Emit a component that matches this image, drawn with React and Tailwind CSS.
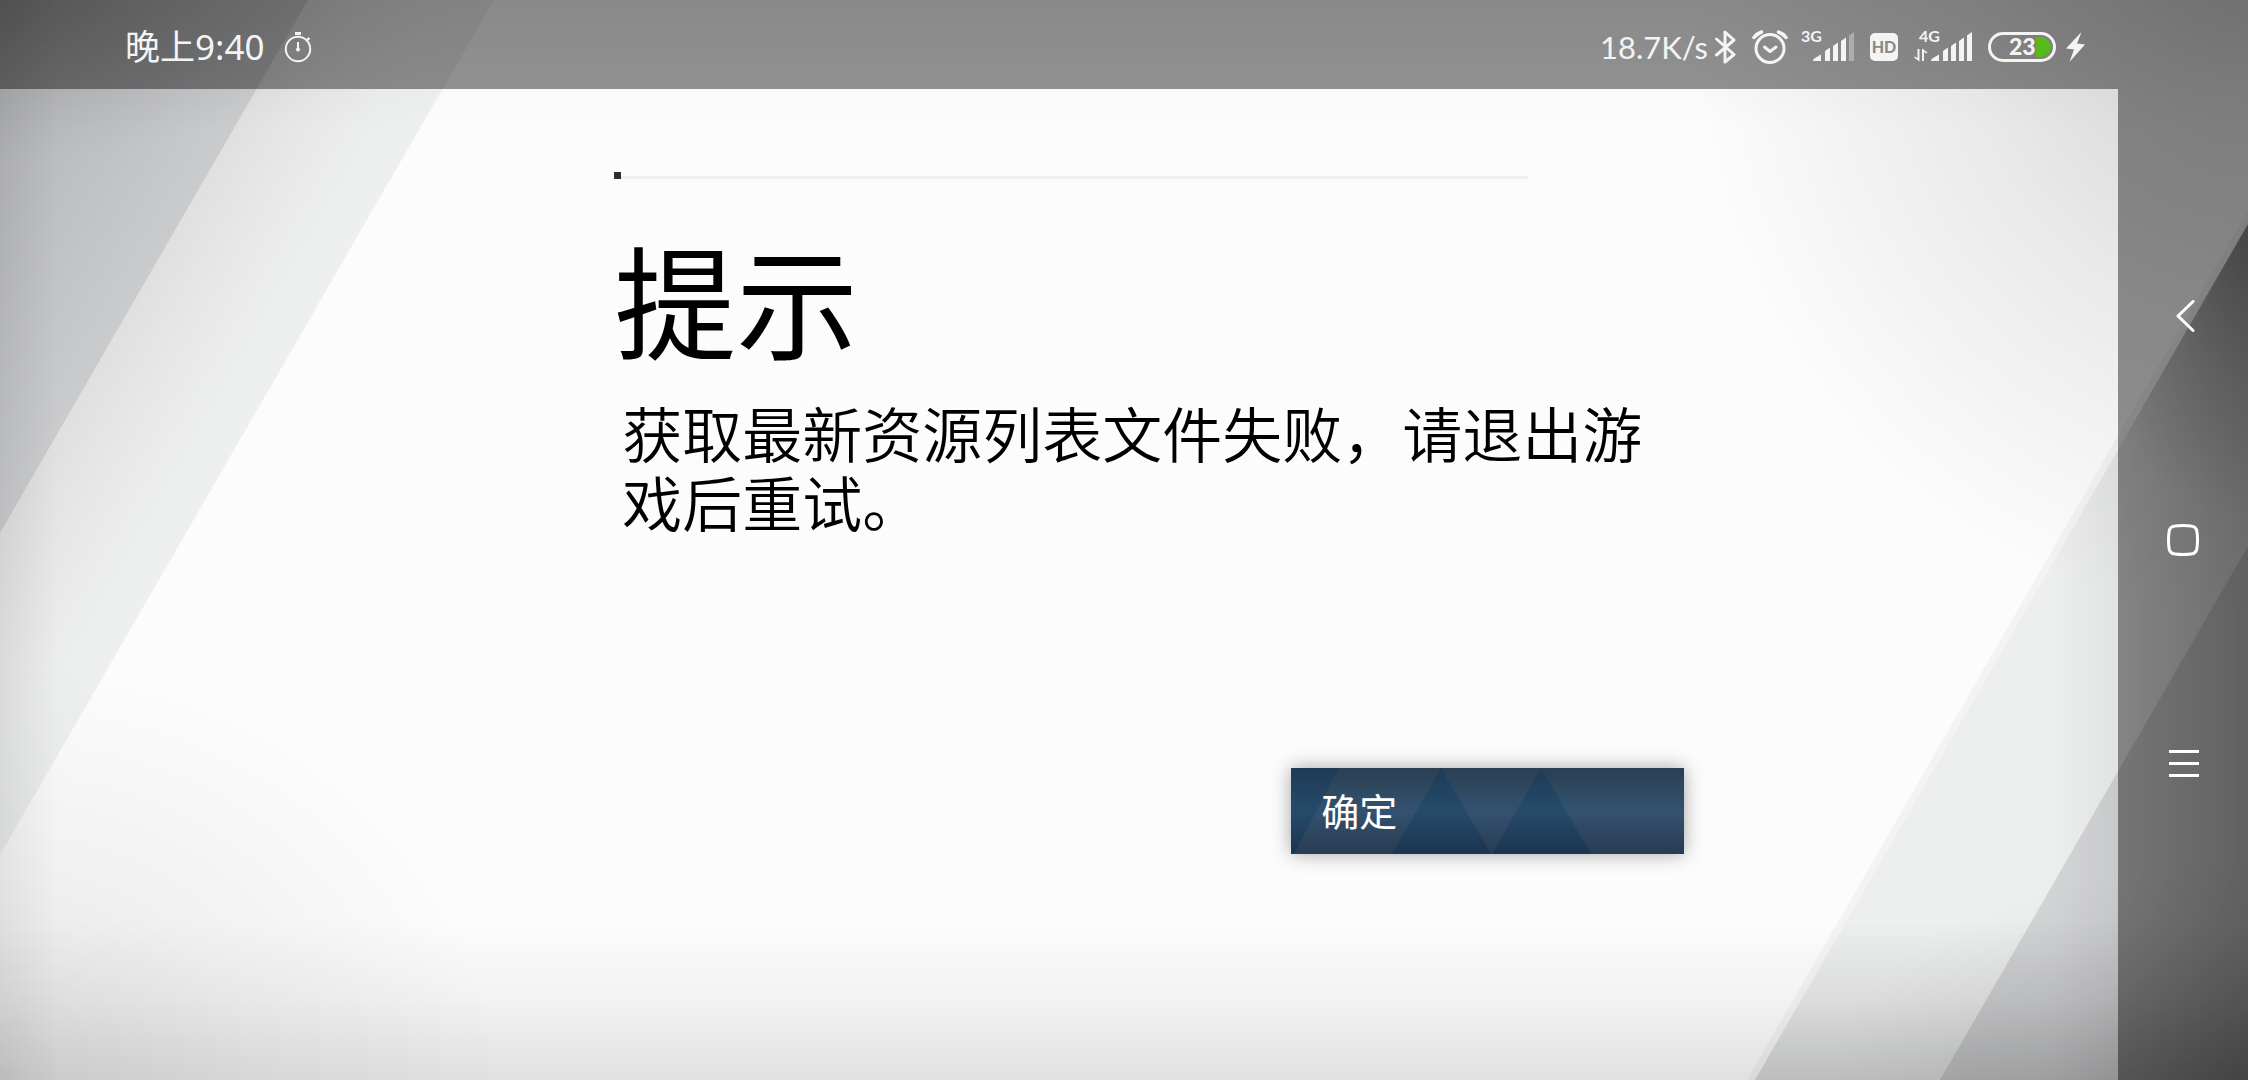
import React from 'react';

const latin = "font-['Lato','Noto_Sans_CJK_SC',sans-serif]";

function Backdrop() {
  return (
    <svg
      className="absolute inset-0 w-full h-full"
      viewBox="0 0 2248 1080"
      preserveAspectRatio="none"
      aria-hidden="true"
    >
      <defs>
        <linearGradient id="top" x1="0" y1="0" x2="0" y2="1">
          <stop offset="0" stopOpacity="0.06" />
          <stop offset="0.65" stopOpacity="0.015" />
          <stop offset="1" stopOpacity="0" />
        </linearGradient>
        <linearGradient id="bottom" x1="0" y1="0" x2="0" y2="1">
          <stop offset="0" stopOpacity="0" />
          <stop offset="0.5" stopOpacity="0.04" />
          <stop offset="1" stopOpacity="0.11" />
        </linearGradient>
        <linearGradient id="left" x1="0" y1="0" x2="1" y2="0">
          <stop offset="0" stopOpacity="0.06" />
          <stop offset="1" stopOpacity="0" />
        </linearGradient>
        <linearGradient id="right" gradientUnits="userSpaceOnUse" x1="2050" y1="0" x2="2248" y2="0">
          <stop offset="0" stopOpacity="0" />
          <stop offset="0.35" stopOpacity="0.05" />
          <stop offset="1" stopOpacity="0.21" />
        </linearGradient>
        <linearGradient id="wedge" gradientUnits="userSpaceOnUse" x1="0" y1="0" x2="231" y2="134">
          <stop offset="0" stopColor="#afb0b2" />
          <stop offset="1" stopColor="#cacbcd" />
        </linearGradient>
        <linearGradient id="stripe" gradientUnits="userSpaceOnUse" x1="231" y1="134" x2="371" y2="214">
          <stop offset="0" stopColor="#e0e0e0" />
          <stop offset="0.7" stopColor="#eceeed" />
          <stop offset="1" stopColor="#eef0ef" />
        </linearGradient>
        <radialGradient id="corner">
          <stop offset="0" stopOpacity="1" />
          <stop offset="0.5" stopOpacity="0.42" />
          <stop offset="1" stopOpacity="0" />
        </radialGradient>
        <clipPath id="band">
          <path d="M2248 224 1755 1080H2248Z" />
        </clipPath>
      </defs>
      <rect width="2248" height="1080" fill="#fcfcfc" />
      <path d="M0 0H494L0 855Z" fill="url(#stripe)" />
      <path d="M0 0H308L0 533Z" fill="url(#wedge)" />
      <path d="M2248 210 1747 1080H2248Z" fill="#f3f3f3" />
      <path d="M2248 224 1755 1080H2248Z" fill="#edefee" />
      <path d="M2248 546 1940 1080H2248Z" fill="#d3d4d6" />

      <rect width="2248" height="130" fill="url(#top)" />
      <rect y="920" width="2248" height="160" fill="url(#bottom)" />
      <rect width="60" height="1080" fill="url(#left)" />
      <ellipse cx="0" cy="0" rx="360" ry="160" fill="url(#corner)" opacity="0.12" />
      <ellipse cx="0" cy="1080" rx="500" ry="420" fill="url(#corner)" opacity="0.11" />
      <ellipse cx="2248" cy="0" rx="560" ry="620" fill="url(#corner)" opacity="0.18" />
      <g clipPath="url(#band)">
        <rect x="2050" width="198" height="1080" fill="url(#right)" />
        <rect x="1728" y="920" width="520" height="160" fill="url(#bottom)" />
        <ellipse cx="2248" cy="240" rx="180" ry="280" fill="url(#corner)" opacity="0.28" />
        <ellipse cx="2248" cy="1080" rx="420" ry="220" fill="url(#corner)" opacity="0.13" />
      </g>
    </svg>
  );
}

function TimerIcon() {
  return (
    <svg width="28" height="32" viewBox="0 0 28 32" fill="none" stroke="currentColor" strokeWidth="2">
      <circle cx="14" cy="18" r="12.2" />
      <path d="M11 2.5H17" strokeWidth="3" />
      <path d="M23 9 25.500 7" strokeWidth="2.500" />
      <path d="M14 11V18" />
      <circle cx="14" cy="18.500" r="2" fill="currentColor" stroke="none" />
    </svg>
  );
}

function BluetoothIcon() {
  return (
    <svg width="21" height="34" viewBox="0 0 21 34" fill="none" stroke="currentColor" strokeWidth="3" strokeLinejoin="round" strokeLinecap="round">
      <path d="M1.500 9 19 24.500 10 32V2L19 10 1.500 25" />
    </svg>
  );
}

function AlarmIcon() {
  return (
    <svg width="36" height="34" viewBox="0 0 36 34" fill="none" stroke="currentColor" strokeWidth="3" strokeLinecap="round">
      <circle cx="18" cy="18.500" r="14" />
      <path d="M12.500 17 18 21.500 24 17" strokeLinejoin="round" />
      <path d="M2 7.500Q5 3.500 9.500 2M34 7.500Q31 3.500 26.500 2" strokeWidth="3.500" />
    </svg>
  );
}

function Signal({ label, weak, data }) {
  return (
    <svg width="58" height="46" viewBox="0 -6 58 46" fill="currentColor">
      <text x="5" y="12" className="font-['Lato',sans-serif] text-[16px] font-bold">{label}</text>
      {data && (
        <path d="M5.500 19V31.500L0 27.500 1 26.500 3.500 28V19ZM8 31V18.500L13.500 22.500 12.500 23.500 10 22V31Z" />
      )}
      <path d="M17 31Q17 29 19 28L25 24.500V31ZM29 31V21L34 17.500V31ZM37 31V16L42 12.500V31ZM45 31V11L50 7.500V31Z" />
      <path d="M53 31V5.500L58 2V31Z" opacity={weak ? 0.35 : 1} />
    </svg>
  );
}

function HdIcon() {
  return (
    <svg width="28" height="28" viewBox="0 0 28 28">
      <rect width="28" height="28" rx="5" fill="currentColor" />
      <text x="14" y="20" textAnchor="middle" fill="#8a8a8a" className="font-['Lato',sans-serif] text-[16px] font-black">HD</text>
    </svg>
  );
}

function Battery() {
  return (
    <svg width="68" height="30" viewBox="0 0 68 30">
      <rect x="1.500" y="1.500" width="65" height="27" rx="13.500" fill="none" stroke="currentColor" strokeWidth="3" />
      <path d="M48 5H53A10 10 0 0 1 53 25H48Z" fill="#58b91c" />
      <text x="21" y="23" fill="currentColor" className="font-['Lato',sans-serif] text-[23px] font-black">23</text>
    </svg>
  );
}

function BoltIcon() {
  return (
    <svg width="19" height="30" viewBox="0 0 19 30" fill="currentColor">
      <path d="M15.500 0 0 16.500 8 17.500 3.500 30 19 12.500 11 11.500Z" />
    </svg>
  );
}

function StatusBar() {
  return (
    <header className="h-[89px] pl-[125px] pr-[33px] pt-[5px] flex items-center justify-between bg-black/42 text-[#f4f4f4]">
      <div className="flex items-center gap-5">
        <span className="font-['Noto_Sans','Noto_Sans_CJK_SC',sans-serif] text-[35px] leading-[40px]">晚上9:40</span>
        <TimerIcon />
      </div>
      <div className="flex items-center">
        <span className={`${latin} text-[31px] leading-[40px] mr-[7px]`}>18.7K/s</span>
        <span className="flex items-center gap-4">
          <BluetoothIcon />
          <AlarmIcon />
          <span className="-ml-2"><Signal label="3G" weak /></span>
          <HdIcon />
          <Signal label="4G" data />
          <Battery />
        </span>
        <span className="ml-[10px]"><BoltIcon /></span>
      </div>
    </header>
  );
}

function NavBar() {
  return (
    <nav className="w-[130px] shrink-0 flex flex-col items-center justify-center gap-48 bg-black/42 text-white">
      <button type="button" aria-label="返回" className="w-8 h-8">
        <svg width="32" height="32" viewBox="0 0 32 32" fill="none" stroke="currentColor" strokeWidth="3" strokeLinecap="round" strokeLinejoin="round">
          <path d="M26 1.500 11 16 26 30.500" />
        </svg>
      </button>
      <button type="button" aria-label="主页" className="w-8 h-8">
        <svg width="32" height="32" viewBox="0 0 32 32" fill="none" stroke="currentColor" strokeWidth="3">
          <path d="M8 2Q16 1 24 2 29.500 2.500 30 8 31 16 30 24 29.500 29.500 24 30 16 31 8 30 2.500 29.500 2 24 1 16 2 8 2.500 2.500 8 2Z" />
        </svg>
      </button>
      <button type="button" aria-label="菜单" className="w-8 h-8">
        <svg width="32" height="32" viewBox="0 0 32 32" fill="none" stroke="currentColor" strokeWidth="3">
          <path d="M2 3.500H32M2 15.500H32M2 27.500H32" />
        </svg>
      </button>
    </nav>
  );
}

function ConfirmButton() {
  return (
    <button
      type="button"
      className="relative w-[393px] h-[86px] px-[30px] pb-[2px] text-left text-white bg-linear-to-b from-[#2a3f54] via-[#33526f] to-[#293b53] shadow-[0_0_18px_rgba(0,0,0,0.35)]"
    >
      <svg className="absolute inset-0 w-full h-full" viewBox="0 0 393 86" preserveAspectRatio="none" aria-hidden="true">
        <defs>
          <linearGradient id="facet" gradientUnits="userSpaceOnUse" x1="0" y1="0" x2="0" y2="86">
            <stop offset="0" stopColor="#1e3a55" />
            <stop offset="0.5" stopColor="#264b6a" />
            <stop offset="1" stopColor="#1b3450" />
          </linearGradient>
        </defs>
        <path d="M0 0H48L3 86H0ZM150 0 101 86H200ZM250 0 201 86H300Z" fill="url(#facet)" />
      </svg>
      <span className="relative text-[38px] leading-[56px]">确定</span>
    </button>
  );
}

export default function App() {
  return (
    <div className="relative min-h-screen flex overflow-hidden font-['Noto_Sans_CJK_SC',sans-serif]">
      <Backdrop />
      <div className="relative flex-1 flex flex-col">
        <StatusBar />
        <main className="ml-[29%] w-full max-w-[1070px] pt-[83px] pb-8 flex flex-col text-black">
          <div className="flex items-end w-[914px]">
            <span className="w-[7px] h-[7px] bg-[#2d2d2d]" />
            <span className="flex-1 h-[3px] bg-[#f0f0f0]" />
          </div>
          <h1 className="mt-[50px] text-[122px] leading-[136px]">提示</h1>
          <p className="mt-[32px] pl-2 text-[60px] leading-[69px] font-[350]">
            获取最新资源列表文件失败，请退出游戏后重试。
          </p>
          <div className="mt-[233px] flex justify-end">
            <ConfirmButton />
          </div>
        </main>
      </div>
      <div className="relative flex">
        <NavBar />
      </div>
    </div>
  );
}
